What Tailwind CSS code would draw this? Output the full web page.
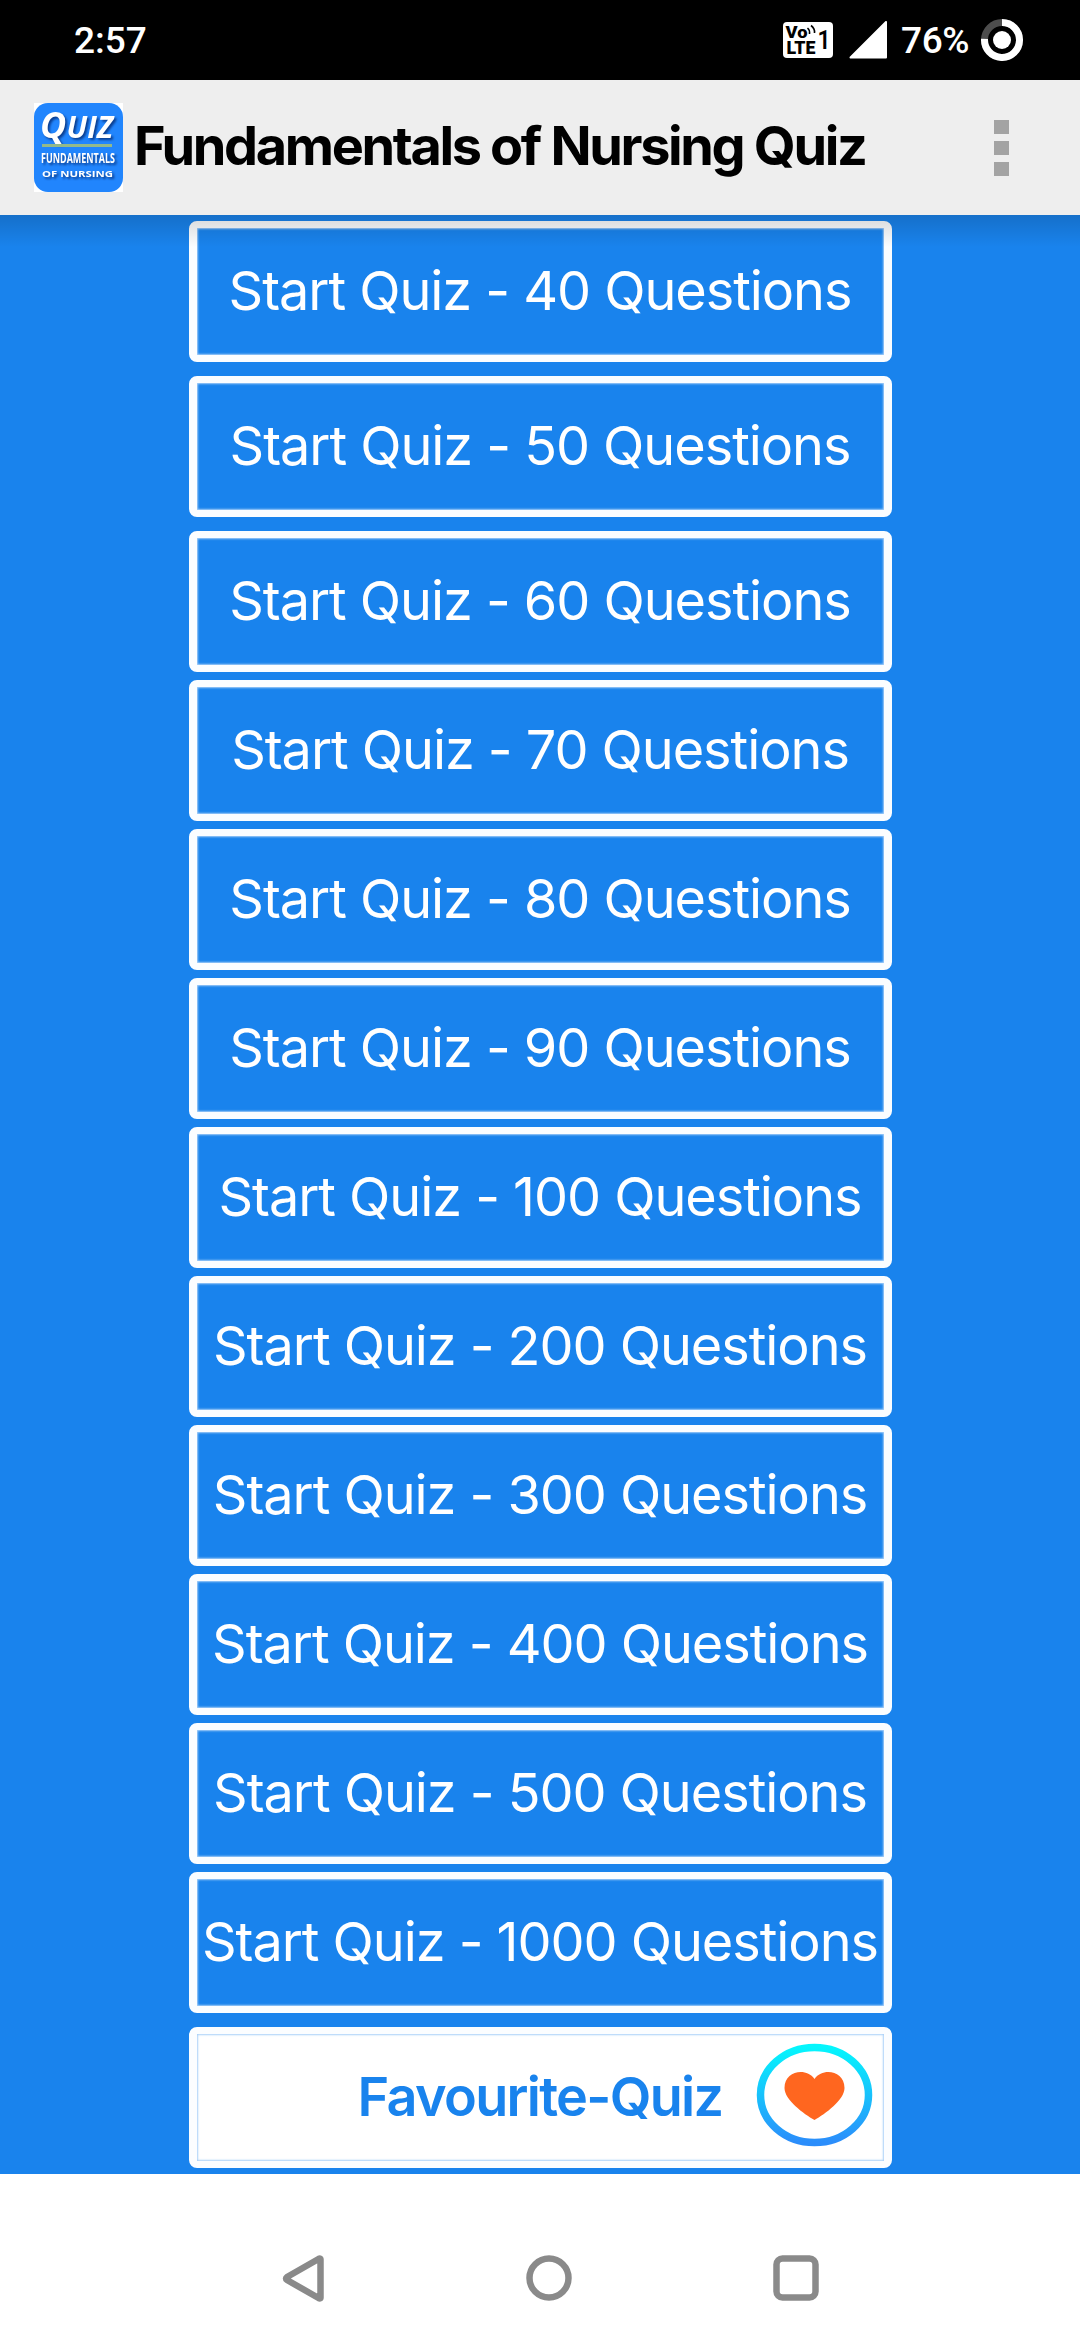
<!DOCTYPE html>
<html lang="en">
<head>
    <meta charset="UTF-8">
    <meta name="viewport" content="width=device-width, initial-scale=1.0">
    <title>Fundamentals of Nursing Quiz</title>
    <script src="https://cdn.jsdelivr.net/npm/@tailwindcss/browser@4"></script>
    <style>
        body {
            font-family: 'Inter', 'Liberation Sans', sans-serif;
        }
        .quiz-button {
            display: flex;
            align-items: center;
            justify-content: center;
            flex-shrink: 0;
            width: 703px;
            height: 141px;
            padding-bottom: 2px;
            border: 8px solid #fbfdff;
            border-top-width: 7px;
            border-bottom-width: 7px;
            border-radius: 8px;
            box-shadow: inset 0 0 2px 1px #a9d0f8;
            white-space: nowrap;
        }
    </style>
</head>
<body class="w-[1080px] h-[2340px] overflow-hidden flex flex-col bg-white">

<!-- Status bar -->
<div class="h-20 shrink-0 bg-black text-white flex items-center justify-between pl-[74px] pr-[57px] font-['Roboto'] font-medium text-[37px]">
    <span class="mt-[2px]">2:57</span>
    <div class="flex items-center">
        <svg class="mr-4" width="50" height="36" viewBox="0 0 50 36">
            <rect width="50" height="36" rx="4" fill="#fff"/>
            <g fill="#000" font-family="Roboto" font-weight="900">
                <text x="2.5" y="16" font-size="17" textLength="22" lengthAdjust="spacingAndGlyphs">Vo</text>
                <text x="3.5" y="31.5" font-size="17.5" textLength="29" lengthAdjust="spacingAndGlyphs">LTE</text>
                <text x="34.5" y="26.5" font-size="25" font-weight="600" textLength="13" lengthAdjust="spacingAndGlyphs">1</text>
            </g>
            <path d="M24.5 6q2.5 2 2 6M28 3.500q4 3 3.500 7.500" fill="none" stroke="#000" stroke-width="1.600"/>
        </svg>
        <svg class="mr-[14px]" width="38" height="38" viewBox="0 0 38 38">
            <path d="M37 1V36.500H1.500Z" fill="#fff" stroke="#fff" stroke-width="2" stroke-linejoin="round"/>
        </svg>
        <span class="w-[80px] mt-[2px] tracking-[-0.4px]">76%</span>
        <svg width="42" height="42" viewBox="0 0 42 42">
            <circle cx="21" cy="21" r="17.500" fill="none" stroke="#4d4d4d" stroke-width="7"/>
            <path d="M21 3.500A17.500 17.500 0 1 1 3.540 19.900" fill="none" stroke="#fff" stroke-width="7"/>
            <circle cx="21" cy="21" r="9" fill="#fff"/>
        </svg>
    </div>
</div>

<!-- Action bar -->
<div class="h-[135px] shrink-0 bg-[#eeeeee] flex items-center pl-[34px] pr-[71px]">
    <svg width="89" height="89" viewBox="0 0 89 89">
        <rect width="89" height="89" fill="#fff"/>
        <rect width="89" height="89" rx="14" fill="#2185fd"/>
        <g class="drop-shadow-[2px_2px_1px_#0b3f92]" fill="#fff" font-family="'Open Sans'" font-weight="700">
            <text x="6" y="35" font-style="italic" font-size="36" textLength="73" lengthAdjust="spacing">Q<tspan font-size="30">UIZ</tspan></text>
            <text x="7" y="60" font-size="14" textLength="74" lengthAdjust="spacingAndGlyphs">FUNDAMENTALS</text>
            <text x="8" y="74" font-size="9.500" textLength="71" lengthAdjust="spacingAndGlyphs">OF NURSING</text>
        </g>
        <path d="M8 42.500H78" stroke="#93b98a" stroke-width="3"/>
    </svg>
    <h1 class="ml-[11px] -mt-1 grow whitespace-nowrap text-black font-bold text-[54px] tracking-[-2.35px]">Fundamentals of Nursing Quiz</h1>
    <div class="flex flex-col gap-[7px] w-[15px]">
        <span class="h-[14px] bg-[#a3a3a3]"></span>
        <span class="h-[14px] bg-[#a3a3a3]"></span>
        <span class="h-[14px] bg-[#a3a3a3]"></span>
    </div>
</div>

<!-- Quiz list -->
<main class="relative h-[1959px] shrink-0 bg-[#1983ed] flex flex-col items-center pt-[6px] text-white text-[54px] tracking-[-1.05px]">
    <div class="flex flex-col gap-[14px]">
        <button class="quiz-button">Start Quiz - 40 Questions</button>
        <button class="quiz-button">Start Quiz - 50 Questions</button>
        <button class="quiz-button">Start Quiz - 60 Questions</button>
    </div>
    <div class="flex flex-col gap-2 mt-2">
        <button class="quiz-button">Start Quiz - 70 Questions</button>
        <button class="quiz-button">Start Quiz - 80 Questions</button>
        <button class="quiz-button">Start Quiz - 90 Questions</button>
        <button class="quiz-button">Start Quiz - 100 Questions</button>
        <button class="quiz-button">Start Quiz - 200 Questions</button>
        <button class="quiz-button">Start Quiz - 300 Questions</button>
        <button class="quiz-button">Start Quiz - 400 Questions</button>
        <button class="quiz-button">Start Quiz - 500 Questions</button>
        <button class="quiz-button">Start Quiz - 1000 Questions</button>
    </div>
    <button class="quiz-button relative mt-[14px] bg-white text-[#1983ed] font-semibold tracking-[-1.7px]">Favourite-Quiz
        <svg class="absolute right-[11px] top-[9px]" width="117" height="104" viewBox="0 0 117 104">
            <defs>
                <linearGradient id="ring" x1="0" y1="0" x2="0" y2="1">
                    <stop offset="0" stop-color="#05f6fd"/>
                    <stop offset="1" stop-color="#2b8dfb"/>
                </linearGradient>
            </defs>
            <ellipse cx="58.500" cy="52" rx="54" ry="47.500" fill="#fff" stroke="url(#ring)" stroke-width="7.500"/>
            <path d="M58.500 77C48 71 28.500 57 28.500 45C28.500 28 50 24 58.500 36C67 24 88.500 28 88.500 45C88.500 57 69 71 58.500 77Z" fill="#ff661f"/>
        </svg>
    </button>
    <!-- shadow under the action bar -->
    <div class="absolute inset-x-0 top-0 h-8 bg-linear-to-b from-black/15 to-transparent"></div>
</main>

<!-- Navigation bar -->
<div class="grow flex items-center pt-[42px] pl-[282px]">
    <svg class="mr-[201px]" width="43" height="47" viewBox="0 0 43 47" fill="none" stroke="#8a8a8a" stroke-width="6.500" stroke-linejoin="round">
        <path d="M38.500 4.500V42.500Q38.500 44 36.500 43L5 25Q3 23.500 5 22L36.500 4Q38.500 3 38.500 4.500Z"/>
    </svg>
    <svg class="mr-[201px]" width="46" height="46" viewBox="0 0 46 46" fill="none" stroke="#8a8a8a" stroke-width="6.500">
        <circle cx="23" cy="23" r="19.500"/>
    </svg>
    <svg width="46" height="46" viewBox="0 0 46 46" fill="none" stroke="#8a8a8a" stroke-width="6.500">
        <rect x="3.500" y="3.500" width="39" height="39" rx="6"/>
    </svg>
</div>

</body>
</html>
